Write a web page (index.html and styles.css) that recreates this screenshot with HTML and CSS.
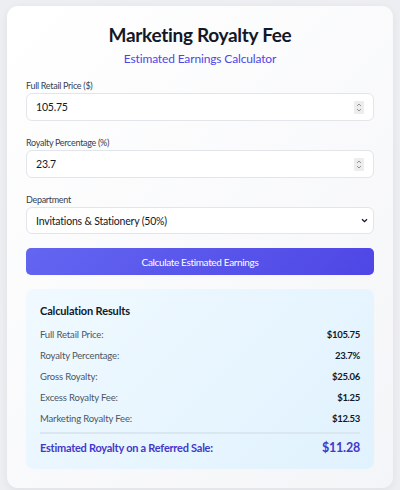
FILE: index.html
```html
<!DOCTYPE html>
<html lang="en">
<head>
  <meta charset="UTF-8">
  <meta name="viewport" content="width=device-width, initial-scale=1.0">
  <title>Marketing Royalty Fee</title>
  <link rel="stylesheet" href="styles.css">
</head>
<body>
  <div class="card">
    <div class="header">
      <h1>Marketing Royalty Fee</h1>
      <p>Estimated Earnings Calculator</p>
    </div>

    <!-- inputs -->
    <div class="field">
      <label for="price">Full Retail Price ($)</label>
      <div class="input-wrap">
        <input type="number" id="price" value="105.75" step="0.01">
        <svg class="spinner" width="10" height="13" viewBox="0 0 10 13"><rect width="10" height="13" rx="1" fill="#ededed"/><path d="M3 5 L5 3 L7 5 M3 8 L5 10 L7 8" fill="none" stroke="#8a8a8a" stroke-width="0.9"/></svg>
      </div>
    </div>
    <div class="field">
      <label for="percent">Royalty Percentage (%)</label>
      <div class="input-wrap">
        <input type="number" id="percent" value="23.7" step="0.1">
        <svg class="spinner" width="10" height="13" viewBox="0 0 10 13"><rect width="10" height="13" rx="1" fill="#ededed"/><path d="M3 5 L5 3 L7 5 M3 8 L5 10 L7 8" fill="none" stroke="#8a8a8a" stroke-width="0.9"/></svg>
      </div>
    </div>
    <div class="field field-last">
      <label for="department">Department</label>
      <div class="input-wrap">
        <select id="department">
          <option>Invitations &amp; Stationery (50%)</option>
          <option>Home Decor (25%)</option>
          <option>Apparel (25%)</option>
        </select>
        <svg class="select-arrow" width="7" height="5" viewBox="0 0 7 5"><path d="M1 1.2 L3.5 3.7 L6 1.2" fill="none" stroke="#111827" stroke-width="1.3"/></svg>
      </div>
    </div>

    <button class="btn-primary" id="calc-btn">Calculate Estimated Earnings</button>

    <!-- results -->
    <div class="results">
      <h2>Calculation Results</h2>
      <div class="result-row"><span>Full Retail Price:</span><span class="value">$105.75</span></div>
      <div class="result-row"><span>Royalty Percentage:</span><span class="value">23.7%</span></div>
      <div class="result-row"><span>Gross Royalty:</span><span class="value">$25.06</span></div>
      <div class="result-row"><span>Excess Royalty Fee:</span><span class="value">$1.25</span></div>
      <div class="result-row"><span>Marketing Royalty Fee:</span><span class="value">$12.53</span></div>
      <div class="result-total"><span>Estimated Royalty on a Referred Sale:</span><span class="value">$11.28</span></div>
    </div>
  </div>
</body>
</html>
```

FILE: styles.css
```css
/* base */
* {
  box-sizing: border-box;
  margin: 0;
  padding: 0;
}

body {
  font-family: Lato, 'Open Sans', sans-serif;
  color: #1f2937;
  background-color: #eceef1;
  padding: 6px 7px 4px;
  min-height: 100vh;
}

.card {
  background: linear-gradient(135deg, #ffffff 0%, #f4f5f8 100%);
  border-radius: 11px;
  box-shadow: 0 2px 8px rgba(0, 0, 0, 0.06);
  padding: 17px 19px 19px;
}

/* header */
.header {
  text-align: center;
  margin-bottom: 12px;
}

.header h1 {
  font-size: 19px;
  line-height: 24px;
  font-weight: 700;
  letter-spacing: -0.3px;
  color: #111827;
  margin-bottom: 3px;
}

.header p {
  font-size: 12px;
  line-height: 17px;
  letter-spacing: -0.15px;
  color: #4f46e5;
}

/* form */
.field {
  margin-bottom: 15px;
}

.field-last {
  margin-bottom: 14px;
}

.field label {
  display: block;
  font-size: 9px;
  line-height: 13px;
  letter-spacing: -0.3px;
  color: #374151;
  margin-bottom: 1px;
}

.input-wrap {
  position: relative;
}

.field input,
.field select {
  width: 100%;
  height: 28px;
  border: 1px solid #e2e5ea;
  border-radius: 6px;
  background-color: #fff;
  padding: 0 24px 0 9px;
  font-family: inherit;
  font-size: 10.5px;
  letter-spacing: -0.2px;
  color: #111827;
  appearance: none;
  -webkit-appearance: none;
  -moz-appearance: textfield;
}

.field input::-webkit-inner-spin-button,
.field input::-webkit-outer-spin-button {
  -webkit-appearance: none;
  margin: 0;
}

.field select {
  height: 27px;
}

/* spinner and arrow drawn over the controls */
.spinner {
  position: absolute;
  right: 10px;
  top: 8px;
  pointer-events: none;
}

.select-arrow {
  position: absolute;
  right: 6px;
  top: 11px;
  pointer-events: none;
}

.field input:focus,
.field select:focus {
  outline: none;
  border-color: #6366f1;
}

.btn-primary {
  display: block;
  width: 100%;
  height: 27px;
  border: none;
  border-radius: 5px;
  background: linear-gradient(135deg, #6366f1 0%, #4f46e5 100%);
  color: #fff;
  font-family: inherit;
  font-size: 10px;
  letter-spacing: -0.35px;
  cursor: pointer;
  margin-bottom: 14px;
}

/* results */
.results {
  background: linear-gradient(135deg, #f0f9ff 0%, #e0f2fe 100%);
  border-radius: 8px;
  padding: 14px 14px 13px;
}

.results h2 {
  font-size: 11px;
  line-height: 16px;
  font-weight: 700;
  letter-spacing: -0.15px;
  color: #111827;
  margin-bottom: 5px;
}

.result-row {
  display: flex;
  justify-content: space-between;
  font-size: 9.5px;
  line-height: 15px;
  letter-spacing: -0.15px;
  padding: 3px 0;
  color: #4b5563;
}

.result-row .value {
  color: #111827;
  font-weight: 700;
  letter-spacing: -0.3px;
}

.result-total {
  display: flex;
  justify-content: space-between;
  align-items: center;
  margin-top: 3px;
  padding-top: 5px;
  border-top: 2px solid #dbe7f0;
  font-size: 11px;
  line-height: 17px;
  font-weight: 700;
  letter-spacing: -0.25px;
  color: #4338ca;
}

.result-total .value {
  font-size: 12.5px;
  font-weight: 700;
  letter-spacing: -0.2px;
}
```
